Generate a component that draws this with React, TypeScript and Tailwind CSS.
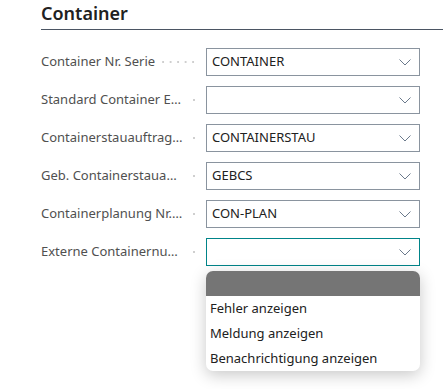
const fields = [
  { label: 'Container Nr. Serie', value: 'CONTAINER' },
  { label: 'Standard Container Einheit', value: '' },
  { label: 'Containerstauauftrag Nr.', value: 'CONTAINERSTAU' },
  { label: 'Geb. Containerstauauftrag', value: 'GEBCS' },
  { label: 'Containerplanung Nr. Serie', value: 'CON-PLAN' },
  { label: 'Externe Containernummer', value: '', focused: true },
]

const options = ['Fehler anzeigen', 'Meldung anzeigen', 'Benachrichtigung anzeigen']

function Chevron() {
  return (
    <svg width="12" height="7" viewBox="0 0 12 7" fill="none" className="shrink-0">
      <path d="M0.5 0.5 L6 6 L11.5 0.5" stroke="#6b7a8c" strokeWidth="1" />
    </svg>
  )
}

function Field({ label, value, focused }: { label: string; value: string; focused?: boolean }) {
  return (
    <div className="relative flex h-[28px] items-center">
      <div className="flex w-[165px] items-center">
        <span className="min-w-0 truncate text-[13px] text-[#505050]">{label}</span>
        <div className="ml-[6px] mr-[9px] h-[4px] min-w-[8px] flex-1 bg-[radial-gradient(circle,#cfcfcf_1px,transparent_1.3px)] bg-[length:7.5px_4px] bg-[position:right_center] bg-repeat-x" />
      </div>
      <div
        className={
          focused
            ? 'flex h-[28px] w-[214px] items-center border border-[#008489] pl-[5px] pr-[8px]'
            : 'flex h-[28px] w-[214px] items-center border border-[#8a949f] pl-[5px] pr-[8px]'
        }
      >
        <span className="flex-1 text-[13px] text-[#212121]">{value}</span>
        <Chevron />
      </div>
      {focused && (
        <div className="absolute left-[165px] top-[33px] w-[214px] overflow-hidden rounded-[7px] bg-white shadow-[0_4px_16px_rgba(0,0,0,0.22)]">
          <div className="h-[25px] bg-[#757575]" />
          {options.map((o) => (
            <div key={o} className="flex h-[25px] items-center px-[4px] text-[13px] text-[#212121]">
              {o}
            </div>
          ))}
        </div>
      )}
    </div>
  )
}

export default function App() {
  return (
    <div className="h-[389px] w-[443px] bg-white pl-[41px] font-['Noto_Sans',sans-serif]">
      {/* Header */}
      <div className="flex h-[30px] items-end border-b border-[#4b5563] pb-[4px]">
        <h2 className="text-[18px] leading-[24px] font-semibold text-[#212121]">Container</h2>
      </div>

      {/* Fields */}
      <div className="mt-[18px] flex flex-col gap-[10px]">
        {fields.map((f) => (
          <Field key={f.label} {...f} />
        ))}
      </div>
    </div>
  )
}
